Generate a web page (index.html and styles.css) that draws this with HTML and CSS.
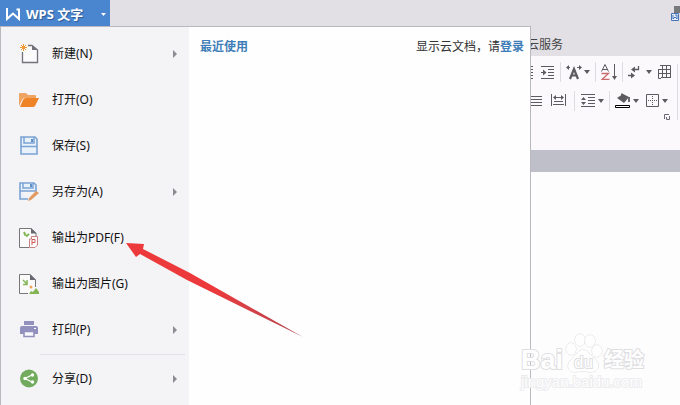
FILE: index.html
```
<!DOCTYPE html>
<html lang="zh-CN">
  <head>
    <meta charset="UTF-8" />
    <meta name="viewport" content="width=device-width, initial-scale=1.0" />
    <title>WPS 文字</title>
    <link rel="stylesheet" href="styles.css">
  </head>
  <body>
    <header class="titlebar">
      <button class="app-button" type="button">
        <svg class="logo" width="16" height="14" viewBox="0 0 16 14" fill="none" stroke="#fff" stroke-width="2">
          <path d="M2 1V12L8 6.500L14 12V2.500M11.500 2.500H15" />
        </svg>
        <span class="app-name">WPS 文字</span>
        <svg class="app-caret" width="5" height="3" viewBox="0 0 5 3"><path d="M0 0H5L2.500 3Z" fill="#fff" /></svg>
      </button>
      <svg class="doc-icon" width="10" height="15" viewBox="0 0 10 15">
        <path d="M4 0H10V7H4Z" fill="#77797a" />
        <path d="M1.500 7.500H8.500V14.500H1.500Z" fill="#e6eefa" stroke="#4775b8" />
        <path d="M3 9V13L5 11L7 13V9H5" fill="none" stroke="#4775b8" />
      </svg>
    </header>

    <nav class="tabs">
      <a class="tab" href="#cloud">云服务</a>
    </nav>

    <section class="ribbon">
      <div class="ribbon-group">
        <div class="tool-row tool-row-indent">
          <button class="tool" type="button" aria-label="减少缩进">
            <svg width="16" height="16" viewBox="0 0 16 16"><path d="M2 2.500H15M8 5.500H15M8 8.500H15M8 11.500H15M2 14.500H15" /></svg>
          </button>
          <button class="tool" type="button" aria-label="增加缩进">
            <svg width="16" height="16" viewBox="0 0 16 16">
              <path d="M2 2.500H15M9 5.500H15M9 8.500H15M9 11.500H15M2 14.500H15M2 8.500H6" />
              <path class="solid" d="M4 5.500L7.500 8.500L4 11.500Z" />
            </svg>
          </button>
          <span class="divider"></span>
          <button class="tool" type="button" aria-label="字符缩放">
            <svg width="16" height="16" viewBox="0 0 16 16">
              <path d="M4 15L8 5L12 15M5.500 11.500H10.500" stroke-width="2.200" />
              <path d="M1 3.500H4M11 3.500H14" />
              <path class="solid" d="M3 1L0 3.500L3 6ZM13 1L16 3.500L13 6Z" />
            </svg>
            <svg class="caret" width="6" height="4" viewBox="0 0 6 4"><path d="M0 0H6L3 4Z" /></svg>
          </button>
          <span class="divider"></span>
          <button class="tool" type="button" aria-label="排序">
            <svg width="16" height="16" viewBox="0 0 16 16">
              <path d="M0.500 7.500L4 0.500L7.500 7.500M2 5.500H6M13.500 0V14" />
              <path class="solid" d="M11 12H16L13.500 16Z" />
              <path class="red" d="M0.500 9.500H7.500L1 15.500H8.500" stroke-width="1.300" />
            </svg>
          </button>
          <span class="divider"></span>
          <button class="tool" type="button" aria-label="显示段落标记">
            <svg width="16" height="16" viewBox="0 0 16 16">
              <path d="M10.500 2V5.500H5M0 11.500H5" stroke-width="1.300" />
              <path class="solid" d="M7 2.500L3 5.500L7 8.500ZM3 8.500L7 11.500L3 14.500Z" />
            </svg>
            <svg class="caret" width="6" height="4" viewBox="0 0 6 4"><path d="M0 0H6L3 4Z" /></svg>
          </button>
          <button class="tool" type="button" aria-label="绘制表格">
            <svg width="16" height="16" viewBox="0 0 16 16"><path d="M3 1.500H13.500V14M1.500 5V14.500H4M2 5.500H13.500M2 9.500H13.500M4 13.500H14M5.500 1V14M9.500 1V14" /></svg>
          </button>
        </div>
        <div class="tool-row">
          <div class="align-tools">
            <button class="tool" type="button" aria-label="两端对齐">
              <svg width="16" height="16" viewBox="0 0 16 16"><path d="M2 3.500H16M2 6.500H16M2 9.500H16M2 12.500H16" /></svg>
            </button>
            <button class="tool" type="button" aria-label="分散对齐">
              <svg width="16" height="16" viewBox="0 0 16 16">
                <path d="M1.500 1V13M15.500 1V13M5 4.500H12M4 8.500H13M3 11.500H14" />
                <path class="solid" d="M6 2L3 4.500L6 7ZM11 2L14 4.500L11 7Z" />
              </svg>
            </button>
          </div>
          <span class="divider"></span>
          <button class="tool" type="button" aria-label="行距">
            <svg width="16" height="16" viewBox="0 0 16 16">
              <path d="M1 1.500H15M8 4.500H15M8 7.500H15M8 10.500H15M1 13.500H15" />
              <path class="solid" d="M1 7L3.500 4L6 7ZM1 9L3.500 12L6 9Z" />
            </svg>
            <svg class="caret" width="6" height="4" viewBox="0 0 6 4"><path d="M0 0H6L3 4Z" /></svg>
          </button>
          <span class="divider"></span>
          <button class="tool" type="button" aria-label="底纹颜色">
            <svg width="16" height="16" viewBox="0 0 16 16">
              <path class="solid" d="M2 5L8 1L14 4L9 10Z" />
              <path d="M7 4V0.500M14 4V9" stroke-width="1.800" />
              <path class="swatch" d="M0.500 12.500H14.500V14.500H0.500Z" />
            </svg>
            <svg class="caret" width="6" height="4" viewBox="0 0 6 4"><path d="M0 0H6L3 4Z" /></svg>
          </button>
          <button class="tool" type="button" aria-label="边框">
            <svg width="16" height="16" viewBox="0 0 16 16">
              <path d="M2.500 1.500H14.500V13.500H2.500Z" />
              <path d="M8.500 3V13M4 7.500H14" stroke-dasharray="1 1" />
            </svg>
            <svg class="caret" width="6" height="4" viewBox="0 0 6 4"><path d="M0 0H6L3 4Z" /></svg>
          </button>
        </div>
        <button class="launcher" type="button" aria-label="段落设置">
          <svg width="6" height="6" viewBox="0 0 6 6"><path d="M0.500 5V0.500H5M5.500 2V5.500H2.500V3" fill="none" stroke="#686878" /></svg>
        </button>
      </div>
    </section>
    <div class="workspace-bar"></div>
    <main class="document"></main>

    <div class="app-menu">
      <div class="menu-list">
        <button class="menu-item" type="button">
          <svg class="menu-icon" width="20" height="22" viewBox="0 0 20 22">
            <path d="M3.500 9V19.500H18.500V7L13 2.500H9" fill="#fbfafc" stroke="#72727a" stroke-width="1.300" />
            <path d="M13 2V7H19Z" fill="#72727a" />
            <path d="M4.500 1V8M1 4.500H8M2 2L7 7M7 2L2 7" stroke="#f09a35" />
          </svg>
          <span class="menu-label">新建(N)</span>
          <svg class="menu-arrow" width="4" height="8" viewBox="0 0 4 8"><path d="M0 0L4 4L0 8Z" /></svg>
        </button>
        <button class="menu-item" type="button">
          <svg class="menu-icon" width="20" height="22" viewBox="0 0 20 22">
            <path d="M0 17V5Q0 4 1 4H7L9 6H16Q17 6 17 7V9H6Q4 9 3 11Z" fill="#f0a461" />
            <path d="M1 18L4 11Q5 9 7 9H20L16 17Q15 18 14 18Z" fill="#ee8427" />
          </svg>
          <span class="menu-label">打开(O)</span>
        </button>
        <button class="menu-item" type="button">
          <svg class="menu-icon" width="20" height="22" viewBox="0 0 20 22">
            <path d="M2 2H16L18 4V19H2Z" fill="#e9f1fa" stroke="#7ba3d3" stroke-width="1.600" />
            <path d="M5 2V8H15V2M2 11.500H18" fill="none" stroke="#7ba3d3" stroke-width="1.500" />
            <path d="M12 4H14V7H12Z" fill="#5f8fc7" />
          </svg>
          <span class="menu-label">保存(S)</span>
        </button>
        <button class="menu-item" type="button">
          <svg class="menu-icon" width="20" height="22" viewBox="0 0 20 22">
            <path d="M9 18H1V2H15L17 4V10H1" fill="#e9f1fa" stroke="#7ba3d3" stroke-width="1.600" />
            <path d="M4 2V7H14V2" fill="none" stroke="#7ba3d3" stroke-width="1.500" />
            <path d="M11 3H13V6H11Z" fill="#5f8fc7" />
            <path d="M9 20L10 17L17 10L20 12L12 19Z" fill="#e09a62" />
          </svg>
          <span class="menu-label">另存为(A)</span>
          <svg class="menu-arrow" width="4" height="8" viewBox="0 0 4 8"><path d="M0 0L4 4L0 8Z" /></svg>
        </button>
        <button class="menu-item" type="button">
          <svg class="menu-icon" width="20" height="22" viewBox="0 0 20 22">
            <path d="M10 20.500H0.500V1.500H12L17 6V9" fill="#fbfafb" stroke="#777" />
            <path d="M12 1V6.500H17.500Z" fill="#666a70" />
            <path d="M5 5L6.500 8.500M10 7L7 9.500" fill="none" stroke="#83b554" stroke-width="2" />
            <path d="M12.500 9.500H18.500V18L16 20.500H10.500V12H12.500Z" fill="#fff" stroke="#c98080" />
            <path d="M13 18V12.500H16V15.500H13" fill="none" stroke="#d05858" />
          </svg>
          <span class="menu-label">输出为PDF(F)</span>
        </button>
        <button class="menu-item" type="button">
          <svg class="menu-icon" width="20" height="22" viewBox="0 0 20 22">
            <path d="M9 20.500H0.500V1.500H11L16.500 7V14" fill="#fbfafb" stroke="#777" />
            <path d="M11 1V7H17Z" fill="#666a70" />
            <path d="M4 7L8 11M8 7V11.500H4" fill="none" stroke="#83b554" stroke-width="1.500" />
            <circle cx="12" cy="14" r="1.500" fill="#efa35b" />
            <path d="M10 21L12 18L14 19L17 15L20 19V21Z" fill="#83b554" />
          </svg>
          <span class="menu-label">输出为图片(G)</span>
        </button>
        <button class="menu-item" type="button">
          <svg class="menu-icon" width="20" height="22" viewBox="0 0 20 22">
            <path d="M5 2H15V6H5Z" fill="#9291bd" />
            <path d="M1 9Q1 7 3 7H17Q19 7 19 9V15H1Z" fill="#9291bd" />
            <path d="M5 12.500H15V17.500H5Z" fill="#f9f9fc" stroke="#9291bd" stroke-width="1.600" />
            <path d="M15 9.500H17" stroke="#fff" />
          </svg>
          <span class="menu-label">打印(P)</span>
          <svg class="menu-arrow" width="4" height="8" viewBox="0 0 4 8"><path d="M0 0L4 4L0 8Z" /></svg>
        </button>
        <hr class="menu-rule" />
        <button class="menu-item" type="button">
          <svg class="menu-icon" width="20" height="22" viewBox="0 0 20 22">
            <circle cx="10" cy="10.500" r="9" fill="#72ab5e" />
            <path d="M13 7L6 10.500L13 14" fill="none" stroke="#fff" stroke-width="1.300" />
            <circle cx="13.500" cy="7" r="1.700" fill="#fff" />
            <circle cx="6" cy="10.500" r="1.700" fill="#fff" />
            <circle cx="13.500" cy="14" r="1.700" fill="#fff" />
          </svg>
          <span class="menu-label">分享(D)</span>
          <svg class="menu-arrow" width="4" height="8" viewBox="0 0 4 8"><path d="M0 0L4 4L0 8Z" /></svg>
        </button>
      </div>
      <div class="recent">
        <h2 class="recent-title">最近使用</h2>
        <p class="cloud-hint">显示云文档，请<a class="login" href="#login">登录</a></p>
      </div>
    </div>

    <svg class="pointer" width="180" height="96" viewBox="0 0 180 96">
      <defs>
        <linearGradient id="pointer-fill">
          <stop offset="0.500" stop-color="#ec3a3c" />
          <stop offset="1" stop-color="#b04a55" />
        </linearGradient>
      </defs>
      <path d="M1 1L19 2L18 7L65 31L178 95L62 38L15 12L11 15Z" fill="url(#pointer-fill)" />
    </svg>

    <div class="watermark">
      <div class="brand">
        <span class="brand-latin">Bai</span>
        <span class="paw">
          <svg width="38" height="40" viewBox="0 0 38 40">
            <ellipse cx="6" cy="16" rx="5" ry="6" />
            <ellipse cx="15" cy="7" rx="5" ry="6" />
            <ellipse cx="25" cy="8" rx="5" ry="6" />
            <ellipse cx="32" cy="18" rx="5" ry="6" />
            <path d="M18 17C23 17 25 22 30 26C36 31 34 39 26 39C21 39 21 38 18 38C14 38 13 39 9 39C2 38 1 31 7 26C11 22 13 17 18 17Z" />
          </svg>
          <span class="paw-text">du</span>
        </span>
        <span class="brand-cjk">经验</span>
      </div>
      <div class="site">jingyan.baidu.com</div>
    </div>
  </body>
</html>
```
FILE: styles.css
```
* {
  box-sizing: border-box;
}

body {
  margin: 0;
  min-height: 100vh;
  display: flex;
  flex-direction: column;
  position: relative;
  overflow: hidden;
  font-family: "Noto Sans", "Noto Sans CJK SC", sans-serif;
  font-size: 12px;
  line-height: 16px;
  color: #222;
  background-color: #fdfdfe;
}

button {
  margin: 0;
  padding: 0;
  border: 0;
  background: none;
  font: inherit;
  color: inherit;
}

svg {
  display: block;
  flex: none;
}

.titlebar {
  display: flex;
  justify-content: space-between;
  align-items: flex-start;
  height: 26px;
  background-color: #e2e0e5;
}

.app-button {
  display: flex;
  align-items: center;
  width: 110px;
  height: 26px;
  padding: 2px 4px 0 5px;
  gap: 5px;
  background-color: #4a86cf;
  color: #fff;
}

.app-name {
  flex: 1;
  font-size: 13px;
  font-weight: 700;
  text-align: left;
  white-space: nowrap;
  text-shadow: 1px 1px 1px #2c5b99;
}

.doc-icon {
  margin-top: 6px;
}

.tabs {
  display: flex;
  align-items: center;
  height: 30px;
  padding: 8px 0 0 527px;
  background-color: #e2e0e5;
}

.tab {
  color: #444;
  text-decoration: none;
}

/* Ribbon */
.ribbon {
  height: 94px;
  padding: 8px 0 0 518px;
  background-color: #fbf9fc;
}

.ribbon-group {
  display: flex;
  flex-direction: column;
  gap: 13px;
  width: 160px;
  border-right: 1px solid #dddce1;
}

.tool-row {
  display: flex;
  align-items: center;
  gap: 5px;
  height: 16px;
  padding-left: 8px;
}

.tool-row-indent {
  padding-left: 0;
}

.align-tools {
  display: flex;
  gap: 8px;
  padding-right: 3px;
}

.divider {
  flex: none;
  width: 1px;
  height: 20px;
  background-color: #dddce1;
}

.tool {
  display: flex;
  align-items: center;
  gap: 2px;
}

.tool path {
  fill: none;
  stroke: #5c5b60;
}

.tool .red {
  stroke: #c96c6c;
}

.tool .solid,
.tool .caret path {
  fill: #5c5b60;
  stroke: none;
}

.tool .swatch {
  fill: #fff;
  stroke: #000;
}

.launcher {
  align-self: flex-end;
  margin: -8px 7px 0 0;
}

.workspace-bar {
  height: 22px;
  background-color: #bebfc9;
}

.document {
  flex: 1;
  background-color: #fdfdfe;
}

/* Application menu, opens over the ribbon and the document */
.app-menu {
  position: absolute;
  top: 26px;
  bottom: 0;
  left: 0;
  width: 531px;
  display: flex;
  border: solid #b9b8bf;
  border-width: 1px 1px 0 1px;
  background-color: #fefefe;
}

.menu-list {
  width: 188px;
  padding-top: 4px;
  background-color: #f4f3f6;
}

.menu-item {
  display: flex;
  align-items: center;
  width: 100%;
  height: 46px;
  padding: 0 12px 0 18px;
  color: #111;
}

.menu-label {
  flex: 1;
  padding-left: 13px;
  text-align: left;
}

.menu-arrow {
  fill: #8d8c92;
}

.menu-rule {
  height: 1px;
  margin: 1px 4px 1px 39px;
  border: 0;
  background-color: #e3e2e6;
}

.recent {
  flex: 1;
  display: flex;
  justify-content: space-between;
  align-items: flex-start;
  padding: 12px 6px 0 11px;
}

.recent-title {
  margin: 0;
  font-size: 12px;
  font-weight: 700;
  color: #3f7db8;
}

.cloud-hint {
  margin: 0;
  color: #333;
}

.login {
  font-weight: 700;
  color: #3f7db8;
  text-decoration: none;
}

.pointer {
  position: absolute;
  top: 242px;
  left: 125px;
}

/* Watermark */
.watermark {
  position: absolute;
  right: 36px;
  bottom: 14px;
  width: 123px;
  color: #fefefe;
  font-family: "Liberation Sans", "Noto Sans CJK SC", sans-serif;
  -webkit-text-stroke: 2px #dfdfe2;
  paint-order: stroke fill;
}

.brand {
  display: flex;
  align-items: flex-end;
  justify-content: space-between;
  height: 40px;
}

.brand-latin {
  font-size: 27px;
  font-weight: 700;
  line-height: 26px;
}

.brand-cjk {
  font-size: 20px;
  font-weight: 700;
  line-height: 26px;
}

.paw {
  position: relative;
}

.paw svg {
  fill: #fefefe;
  stroke: #dcdcdf;
}

.paw-text {
  position: absolute;
  right: 0;
  bottom: 2px;
  left: 0;
  font-size: 17px;
  text-align: center;
}

.site {
  font-size: 15px;
  line-height: 18px;
  -webkit-text-stroke: 2px #ececee;
}
```
